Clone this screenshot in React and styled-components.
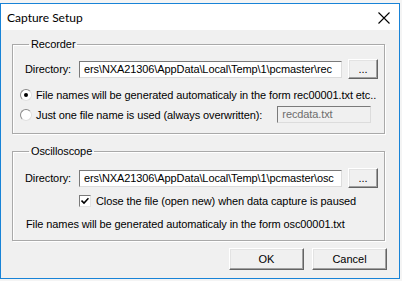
import React from 'react';
import styled, { createGlobalStyle } from 'styled-components';

const GlobalStyle = createGlobalStyle`
  html, body {
    margin: 0;
    padding: 0;
    background: #f4f4f4;
  }
  body {
    font-family: "Liberation Sans", Arial, sans-serif;
    font-size: 11px;
    letter-spacing: -0.1px;
    color: #000;
  }
`;

const Dialog = styled.div`
  box-sizing: border-box;
  width: 400px;
  height: 276px;
  margin-top: 3px;
  border: 1px solid #1883d7;
  background: #f0f0f0;
  display: flex;
  flex-direction: column;
`;

const TitleBar = styled.div`
  height: 26px;
  background: #fff;
  display: flex;
  align-items: center;
  justify-content: space-between;
  padding: 0 9px 0 6px;
  font-family: Lato, "Open Sans", sans-serif;
  font-size: 12px;
  letter-spacing: 0;
`;

const CloseIcon = styled.svg`
  width: 12px;
  height: 12px;
  margin-top: 1px;
`;

const Body = styled.div`
  flex: 1;
  display: flex;
  flex-direction: column;
  padding: 8px 12px 0 11px;
`;

const Group = styled.fieldset`
  box-sizing: border-box;
  height: ${(p) => p.$height}px;
  margin: ${(p) => p.$top}px 2px 0 0;
  padding: ${(p) => p.$padTop}px 6px 0 12px;
  border: 1px solid #a9a9a9;
  box-shadow: inset 1px 1px 0 #fff, 1px 1px 0 #fff;
  display: flex;
  flex-direction: column;
  min-width: 0;
`;

const Legend = styled.legend`
  padding: 0 2px;
  margin-left: 4px;
  line-height: 13px;
  height: 13px;
`;

const Row = styled.div`
  display: flex;
  align-items: center;
  height: ${(p) => p.$h || 16}px;
  margin-top: ${(p) => p.$mt || 0}px;
  margin-left: ${(p) => p.$ml || 0}px;
  white-space: nowrap;
`;

const Label = styled.span`
  width: 54px;
  flex-shrink: 0;
`;

const Edit = styled.div`
  box-sizing: border-box;
  flex-shrink: 0;
  width: ${(p) => p.$w}px;
  height: 17px;
  margin-left: ${(p) => p.$ml || 0}px;
  border: 1px solid;
  border-color: #7a7a7a #dcdcdc #dcdcdc #7a7a7a;
  background: ${(p) => (p.$disabled ? '#f0f0f0' : '#fff')};
  color: ${(p) => (p.$disabled ? '#6d6d6d' : '#000')};
  padding-left: 4px;
  line-height: 15px;
  overflow: hidden;
  white-space: nowrap;
`;

const Button = styled.button`
  box-sizing: border-box;
  flex-shrink: 0;
  width: ${(p) => p.$w}px;
  height: ${(p) => p.$h}px;
  margin-left: ${(p) => p.$ml || 0}px;
  padding: 0;
  font-family: "Liberation Sans", Arial, sans-serif;
  font-size: 11px;
  color: #000;
  background: #f0f0f0;
  border: 1px solid;
  border-color: #fff #646464 #646464 #fff;
  box-shadow: inset -1px -1px 0 #a0a0a0, inset 1px 1px 0 #e3e3e3;
`;

const Radio = styled.span`
  box-sizing: border-box;
  flex-shrink: 0;
  width: 12px;
  height: 12px;
  border-radius: 50%;
  border: 1px solid #8a8a8a;
  border-right-color: #e0e0e0;
  border-bottom-color: #e0e0e0;
  background: #fff;
  margin-right: 4px;
  display: flex;
  align-items: center;
  justify-content: center;
  &::after {
    content: '';
    width: 4px;
    height: 4px;
    border-radius: 50%;
    background: ${(p) => (p.$checked ? '#000' : 'transparent')};
  }
`;

const Check = styled.span`
  box-sizing: border-box;
  flex-shrink: 0;
  width: 12px;
  height: 12px;
  border: 1px solid;
  border-color: #7a7a7a #e3e3e3 #e3e3e3 #7a7a7a;
  background: #fff;
  margin-right: 5px;
  display: flex;
  align-items: center;
  justify-content: center;
`;

const Buttons = styled.div`
  display: flex;
  justify-content: flex-end;
  gap: 8px;
  margin-top: 7px;
`;

export default function App() {
  return (
    <>
      <GlobalStyle />
      <Dialog>
        <TitleBar>
          <span>Capture Setup</span>
          <CloseIcon viewBox="0 0 12 12">
            <path d="M0.5 0.5 L11.5 11.5 M11.5 0.5 L0.5 11.5" stroke="#000" strokeWidth="1.1" />
          </CloseIcon>
        </TitleBar>
        <Body>
          <Group $top={0} $height={96} $padTop={8}>
            <Legend>Recorder</Legend>
            <Row $h={20}>
              <Label>Directory:</Label>
              <Edit $w={263}>ers\NXA21306\AppData\Local\Temp\1\pcmaster\rec</Edit>
              <Button $w={30} $h={20} $ml={6}>...</Button>
            </Row>
            <Row $mt={8} $ml={-5}>
              <Radio $checked />
              File names will be generated automaticaly in the form rec00001.txt etc..
            </Row>
            <Row $h={17} $mt={3} $ml={-5}>
              <Radio />
              Just one file name is used (always overwritten):
              <Edit $w={94} $ml={15} $disabled>recdata.txt</Edit>
            </Row>
          </Group>
          <Group $top={11} $height={96} $padTop={10}>
            <Legend>Oscilloscope</Legend>
            <Row $h={20}>
              <Label>Directory:</Label>
              <Edit $w={263}>ers\NXA21306\AppData\Local\Temp\1\pcmaster\osc</Edit>
              <Button $w={30} $h={20} $ml={6}>...</Button>
            </Row>
            <Row $mt={5} $ml={54}>
              <Check>
                <svg width="8" height="8" viewBox="0 0 8 8">
                  <path d="M0.5 3.5 L3 6 L7.5 1.2" stroke="#000" strokeWidth="1.6" fill="none" />
                </svg>
              </Check>
              Close the file (open new) when data capture is paused
            </Row>
            <Row $h={14} $mt={8} $ml={1}>
              File names will be generated automaticaly in the form osc00001.txt
            </Row>
          </Group>
          <Buttons>
            <Button $w={75} $h={22}>OK</Button>
            <Button $w={75} $h={22}>Cancel</Button>
          </Buttons>
        </Body>
      </Dialog>
    </>
  );
}
